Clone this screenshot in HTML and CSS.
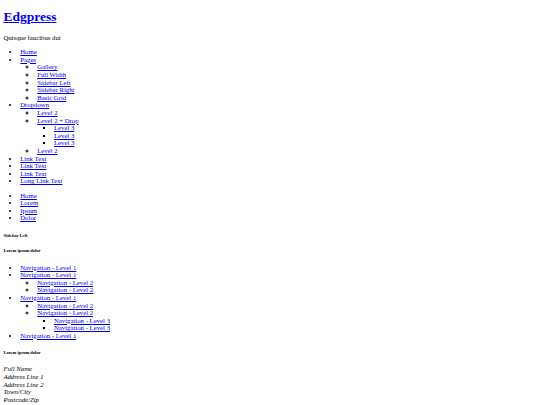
FILE: index.html
```html
<!DOCTYPE html>
<html>
<head>
<meta charset="utf-8">
<title>Edgpress</title>
<link rel="stylesheet" href="styles.css">
</head>
<body class="page">
<header class="site-header">
  <h1 class="site-title"><a href="#">Edgpress</a></h1>
  <p class="site-desc">Quisque faucibus dui</p>
  <nav class="main-nav">
    <ul class="list">
      <li><a href="#">Home</a></li>
      <li><a href="#">Pages</a>
        <ul class="list">
          <li><a href="#">Gallery</a></li>
          <li><a href="#">Full Width</a></li>
          <li><a href="#">Sidebar Left</a></li>
          <li><a href="#">Sidebar Right</a></li>
          <li><a href="#">Basic Grid</a></li>
        </ul>
      </li>
      <li><a href="#">Dropdown</a>
        <ul class="list">
          <li><a href="#">Level 2</a></li>
          <li><a href="#">Level 2 + Drop</a>
            <ul class="list">
              <li><a href="#">Level 3</a></li>
              <li><a href="#">Level 3</a></li>
              <li><a href="#">Level 3</a></li>
            </ul>
          </li>
          <li><a href="#">Level 2</a></li>
        </ul>
      </li>
      <li><a href="#">Link Text</a></li>
      <li><a href="#">Link Text</a></li>
      <li><a href="#">Link Text</a></li>
      <li><a href="#">Long Link Text</a></li>
    </ul>
  </nav>
  <ul class="list crumbs">
    <li><a href="#">Home</a></li>
    <li><a href="#">Lorem</a></li>
    <li><a href="#">Ipsum</a></li>
    <li><a href="#">Dolor</a></li>
  </ul>
</header>
<main class="content">
  <h6 class="mini-title">Sidebar Left</h6>
  <aside class="sidebar">
    <h6 class="mini-title">Lorem ipsum dolor</h6>
    <nav class="side-nav">
      <ul class="list">
        <li><a href="#">Navigation - Level 1</a></li>
        <li><a href="#">Navigation - Level 1</a>
          <ul class="list">
            <li><a href="#">Navigation - Level 2</a></li>
            <li><a href="#">Navigation - Level 2</a></li>
          </ul>
        </li>
        <li><a href="#">Navigation - Level 1</a>
          <ul class="list">
            <li><a href="#">Navigation - Level 2</a></li>
            <li><a href="#">Navigation - Level 2</a>
              <ul class="list">
                <li><a href="#">Navigation - Level 3</a></li>
                <li><a href="#">Navigation - Level 3</a></li>
              </ul>
            </li>
          </ul>
        </li>
        <li><a href="#">Navigation - Level 1</a></li>
      </ul>
    </nav>
    <h6 class="mini-title">Lorem ipsum dolor</h6>
    <address class="addr">
      Full Name<br>
      Address Line 1<br>
      Address Line 2<br>
      Town/City<br>
      Postcode/Zip
    </address>
  </aside>
</main>
</body>
</html>
```

FILE: styles.css
```css
.page {
  margin: 3.375px;
  font-family: "Liberation Serif", "Times New Roman", serif;
  font-size: 6.75px;
  line-height: 7.6px;
  color: #000;
}
.site-title {
  font-size: 13.5px;
  line-height: normal;
  font-weight: bold;
  margin: 5.5px 0 9px;
}
.site-desc {
  margin: 6.75px 0;
}
.list {
  margin: 6.75px 0;
  padding-left: 16.875px;
  list-style-type: disc;
}
.list .list {
  margin: 0;
  list-style-type: circle;
}
.list .list > li::marker {
  font-size: 8px;
}
.list .list .list {
  list-style-type: square;
}
.mini-title {
  font-size: 4.5px;
  line-height: normal;
  font-weight: bold;
  margin: 10.5px 0;
}
.addr {
  font-style: italic;
}
```
